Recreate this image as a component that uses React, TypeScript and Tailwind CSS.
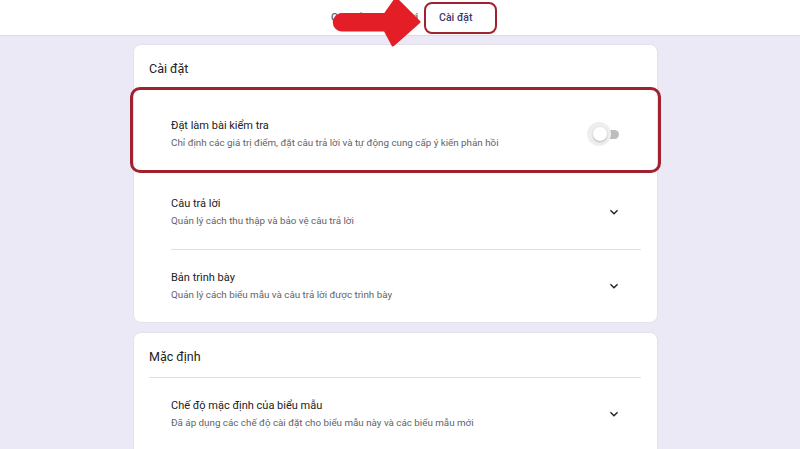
import React from "react";

function Chevron() {
  return (
    <svg viewBox="0 0 24 24" className="h-[16px] w-[16px] shrink-0 fill-[#202124]">
      <path d="M7.41 8.59L12 13.17l4.59-4.58L18 10l-6 6-6-6 1.41-1.41z" />
    </svg>
  );
}

function RowText({ title, sub }: { title: string; sub: string }) {
  return (
    <div className="flex flex-col">
      <span className="text-[11px] leading-[14px] text-[#202124]">{title}</span>
      <span className="mt-[4px] text-[9.8px] leading-[12px] text-[#5f6368]">{sub}</span>
    </div>
  );
}

function Toggle() {
  return (
    <div className="relative h-[24px] w-[32px]">
      <div className="absolute left-[8px] top-[8px] h-[9px] w-[24px] rounded-full bg-[#bdbdbd]" />
      <div className="absolute left-0 top-0 h-[24px] w-[24px] rounded-full bg-[#eeeeee]" />
      <div className="absolute left-[6px] top-[5px] h-[14px] w-[14px] rounded-full bg-white shadow-[0_1px_2px_rgba(0,0,0,0.25)]" />
    </div>
  );
}

export default function App() {
  return (
    <div className="relative h-[449px] w-[800px] overflow-hidden bg-[#ece9f7] font-[Roboto,sans-serif]">
      <header className="relative h-[36px] border-b border-[#dadce0] bg-white">
        <nav className="flex h-full items-center pl-[331px] text-[10.5px] font-medium text-[#5f6368]">
          <span>Câu hỏi</span>
          <span className="ml-[4px]">Câu trả lời</span>
          <span className="ml-[21px] text-[#3f3672]">Cài đặt</span>
        </nav>
        <svg viewBox="0 0 95 48" className="absolute left-[330px] top-0 h-[48px] w-[95px]">
          <path
            d="M12,14.5 L55,14.5 L66,-1 L89,22 L63,45 L55,30 L12,30 A7.75,7.75 0 0 1 12,14.5 Z"
            fill="#e41e26"
            stroke="#e41e26"
            strokeWidth="3"
            strokeLinejoin="round"
          />
        </svg>
        <div className="absolute left-[424px] top-[2px] h-[32px] w-[73px] rounded-[8px] border-[2.5px] border-[#a0222e]" />
      </header>

      <main className="flex flex-col gap-[9px] pl-[133px] pt-[8px]">
        <section className="w-[525px] rounded-[8px] border border-[#e4e1ec] bg-white">
          <h2 className="px-[15px] pb-[11px] pt-[16px] text-[12.5px] leading-[15px] text-[#202124]">Cài đặt</h2>

          <div className="relative flex h-[86px] items-center justify-between pl-[37px] pr-[38px] pt-[8px]">
            <div className="absolute -inset-x-[4px] inset-y-0 rounded-[10px] border-[3px] border-[#a0222e]" />
            <RowText
              title="Đặt làm bài kiểm tra"
              sub="Chỉ định các giá trị điểm, đặt câu trả lời và tự động cung cấp ý kiến phản hồi"
            />
            <Toggle />
          </div>

          <div className="ml-[37px] mr-[16px]">
            <div className="flex h-[76px] items-center justify-between pr-[19px] pt-[2px]">
              <RowText title="Câu trả lời" sub="Quản lý cách thu thập và bảo vệ câu trả lời" />
              <Chevron />
            </div>
            <div className="h-px bg-[#e0e0e0]" />
            <div className="flex h-[72px] items-center justify-between pr-[19px]">
              <RowText title="Bản trình bày" sub="Quản lý cách biểu mẫu và câu trả lời được trình bày" />
              <Chevron />
            </div>
          </div>
        </section>

        <section className="w-[525px] rounded-[8px] border border-[#e4e1ec] bg-white pb-[40px]">
          <h2 className="px-[15px] pb-[13px] pt-[16px] text-[12.5px] leading-[15px] text-[#202124]">Mặc định</h2>
          <div className="ml-[15px] mr-[16px] h-px bg-[#e0e0e0]" />
          <div className="ml-[37px] mr-[16px]">
            <div className="flex h-[71px] items-center justify-between pr-[19px]">
              <RowText
                title="Chế độ mặc định của biểu mẫu"
                sub="Đã áp dụng các chế độ cài đặt cho biểu mẫu này và các biểu mẫu mới"
              />
              <Chevron />
            </div>
          </div>
        </section>
      </main>
    </div>
  );
}
